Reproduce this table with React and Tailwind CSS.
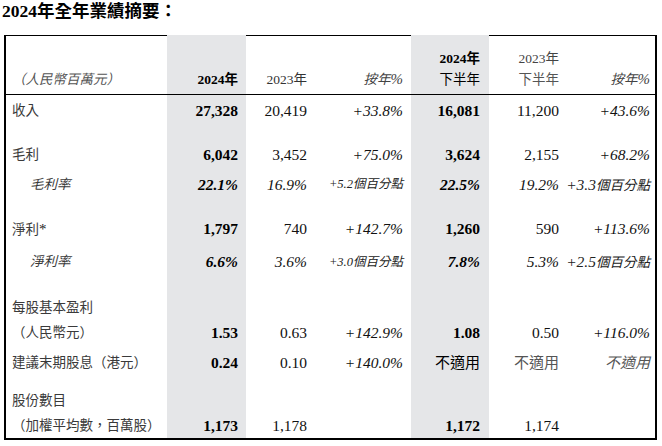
const serif = "font-['Liberation_Serif','Noto_Sans_CJK_TC',serif]";

const cols = [
    "w-[161px] pl-[6px]",
    "w-[79px] pr-[8px] bg-[#e5e6e8]",
    "w-[69px] pr-[8px]",
    "w-[96px] pr-[8px]",
    "w-[78px] pr-[9px] bg-[#e5e6e8]",
    "w-[78px] pr-[8px]",
    "w-[88px] pr-[5px]",
];

function Pts({ n, small }) {
    return (
        <span className={small ? "text-[12.5px] italic text-[#222]" : "italic text-[#222]"}>
            {n}
            <span className={small ? "text-[12.5px]" : "text-[13.5px]"}>個百分點</span>
        </span>
    );
}

function Row({ h, cells = [] }) {
    return (
        <div className={`flex ${h}`}>
            {cols.map((c, i) => (
                <div
                    key={i}
                    className={`flex items-center whitespace-nowrap ${i === 0 ? "justify-start" : "justify-end"} ${c}`}
                >
                    {cells[i]}
                </div>
            ))}
        </div>
    );
}

const label = "text-[13.5px] text-[#3a3a3a]";
const sub = "text-[13.5px] text-[#3a3a3a] italic pl-[18px]";
const bold = "font-bold text-black";
const num = "text-[#111]";
const pct = "italic text-[#111]";

function App() {
    return (
        <div className={`w-[662px] h-[446px] bg-white ${serif} text-[15.5px] leading-none`}>
            <div className="h-[24px] pl-[2px] flex items-center text-[17.5px] font-bold text-black">
                2024年全年業績摘要：
            </div>
            <div className="ml-[4px] mt-[11px] w-[653px] border-l-2 border-r-2 border-b-2 border-black">
                {/* header */}
                <div className="flex h-[60px]">
                    {cols.map((c, i) => {
                        const shaded = i === 1 || i === 4;
                        return (
                            <div
                                key={i}
                                className={`flex flex-col justify-end pb-[4px] border-t border-b border-b-black text-[13.5px] leading-[21px] ${i === 0 ? "items-start" : "items-end"} ${shaded ? "border-t-transparent" : "border-t-black"} ${c}`}
                            >
                                {i === 0 && <span className="italic text-[#555]">（人民幣百萬元）</span>}
                                {i === 1 && <span className="font-bold text-black">2024年</span>}
                                {i === 2 && <span className="text-[#333]">2023年</span>}
                                {(i === 3 || i === 6) && (
                                    <span className="italic text-[#444]">
                                        按年<span className="text-[15px]">%</span>
                                    </span>
                                )}
                                {i === 4 && (
                                    <>
                                        <span className="font-bold text-black">2024年</span>
                                        <span className="text-black">下半年</span>
                                    </>
                                )}
                                {i === 5 && (
                                    <>
                                        <span className="text-[#444]">2023年</span>
                                        <span className="text-[#555]">下半年</span>
                                    </>
                                )}
                            </div>
                        );
                    })}
                </div>

                <Row
                    h="h-[31px]"
                    cells={[
                        <span className={label}>收入</span>,
                        <span className={bold}>27,328</span>,
                        <span className={num}>20,419</span>,
                        <span className={pct}>+33.8%</span>,
                        <span className={bold}>16,081</span>,
                        <span className={num}>11,200</span>,
                        <span className={pct}>+43.6%</span>,
                    ]}
                />
                <Row h="h-[14px]" />
                <Row
                    h="h-[30px]"
                    cells={[
                        <span className={label}>毛利</span>,
                        <span className={bold}>6,042</span>,
                        <span className={num}>3,452</span>,
                        <span className={pct}>+75.0%</span>,
                        <span className={bold}>3,624</span>,
                        <span className={num}>2,155</span>,
                        <span className={pct}>+68.2%</span>,
                    ]}
                />
                <Row
                    h="h-[29px]"
                    cells={[
                        <span className={sub}>毛利率</span>,
                        <span className={`${bold} italic`}>22.1%</span>,
                        <span className={pct}>16.9%</span>,
                        <Pts n="+5.2" small />,
                        <span className={`${bold} italic`}>22.5%</span>,
                        <span className={pct}>19.2%</span>,
                        <Pts n="+3.3" />,
                    ]}
                />
                <Row h="h-[15px]" />
                <Row
                    h="h-[30px]"
                    cells={[
                        <span className={label}>
                            淨利<span className="text-[15px] text-[#222]">*</span>
                        </span>,
                        <span className={bold}>1,797</span>,
                        <span className={num}>740</span>,
                        <span className={pct}>+142.7%</span>,
                        <span className={bold}>1,260</span>,
                        <span className={num}>590</span>,
                        <span className={pct}>+113.6%</span>,
                    ]}
                />
                <Row
                    h="h-[36px]"
                    cells={[
                        <span className={sub}>淨利率</span>,
                        <span className={`${bold} italic`}>6.6%</span>,
                        <span className={pct}>3.6%</span>,
                        <Pts n="+3.0" small />,
                        <span className={`${bold} italic`}>7.8%</span>,
                        <span className={pct}>5.3%</span>,
                        <Pts n="+2.5" />,
                    ]}
                />
                <Row h="h-[15px]" />
                <Row h="h-[25px]" cells={[<span className={label}>每股基本盈利</span>]} />
                <Row
                    h="h-[25px]"
                    cells={[
                        <span className={label}>（人民幣元）</span>,
                        <span className={bold}>1.53</span>,
                        <span className={num}>0.63</span>,
                        <span className={pct}>+142.9%</span>,
                        <span className={bold}>1.08</span>,
                        <span className={num}>0.50</span>,
                        <span className={pct}>+116.0%</span>,
                    ]}
                />
                <Row
                    h="h-[36px]"
                    cells={[
                        <span className={label}>建議末期股息（港元）</span>,
                        <span className={bold}>0.24</span>,
                        <span className={num}>0.10</span>,
                        <span className={pct}>+140.0%</span>,
                        <span className="text-[15px] text-black">不適用</span>,
                        <span className="text-[15px] text-[#555]">不適用</span>,
                        <span className="text-[15px] italic text-[#555]">不適用</span>,
                    ]}
                />
                <Row h="h-[7px]" />
                <Row h="h-[25px]" cells={[<span className={label}>股份數目</span>]} />
                <Row
                    h="h-[25px]"
                    cells={[
                        <span className={label}>（加權平均數，百萬股）</span>,
                        <span className={bold}>1,173</span>,
                        <span className={num}>1,178</span>,
                        null,
                        <span className={bold}>1,172</span>,
                        <span className={num}>1,174</span>,
                        null,
                    ]}
                />
            </div>
        </div>
    );
}

export default App;
